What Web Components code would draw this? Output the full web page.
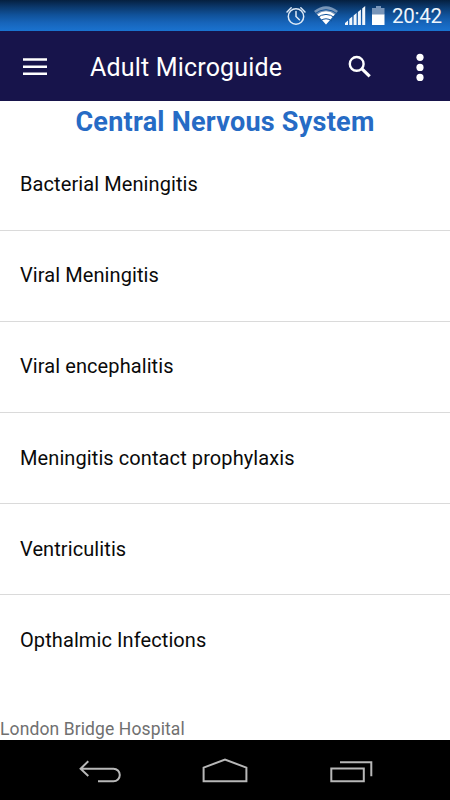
<!DOCTYPE html>
<html lang="en">
<head>
<meta charset="utf-8">
<title>Adult Microguide</title>
<style>
html, body { margin: 0; height: 100%; }
body { background: #fff; font-family: Roboto, "Liberation Sans", sans-serif; overflow: hidden; }
</style>
</head>
<body>
<guide-screen></guide-screen>
<script>
function define(name, html) {
  const template = document.createElement('template');
  template.innerHTML = html;
  customElements.define(name, class extends HTMLElement {
    constructor() {
      super();
      this.attachShadow({ mode: 'open' }).append(template.content.cloneNode(true));
    }
  });
}

define('status-bar', `
<style>
:host { display: flex; justify-content: flex-end; align-items: center; box-sizing: border-box; height: 31px; padding-right: 8px;
  background: linear-gradient(#05203f 0, #0a3566 6px, #10529a 15px, #1765bb 23px, #1a73d0 31px); color: #eef5fc; }
svg { display: block; flex: none; }
span { font-size: 20.5px; line-height: 31px; padding-top: 1px; width: 50px; margin-left: 7px; white-space: nowrap; letter-spacing: -.25px; }
</style>
<svg width="100" height="31" viewBox="285 0 100 31" fill="none">
  <g stroke="#dfeaf6" stroke-width="1.5">
    <circle cx="296" cy="16.5" r="7.7"/>
    <path d="M296 11.5v5l3.4 3.2M287 12l4.2-4.2M305 12l-4.2-4.2" stroke-linecap="round"/>
  </g>
  <path d="M314 11Q326 1.500 338 11L326 24.500Z" fill="#7795b8"/>
  <path d="M317.300 14.500Q326 8 334.700 14.500L326 24.500Z" fill="#fff"/>
  <path d="M314 14.300Q326 5 338 14.300M317 17.800Q326 11 335 17.800M320 21Q326 16.500 332 21" stroke="#11539b" stroke-width="1"/>
  <path d="M345 25v-2l3-2.500v4.500zM349.300 25v-6l3-2.500v8.500zM353.600 25v-9.500l3-2.500v12zM357.900 25v-13l3-2.500v15.500zM362.200 25v-16.500l3-2.500v19z" fill="#f2f6fb"/>
  <path d="M376 6h5v2h3.500v7h-12.500v-7h4z" fill="#7895b9"/>
  <path d="M372 14.500h12.500v10.500h-12.500z" fill="#fff"/>
</svg>
<span><slot></slot></span>`);

define('app-bar', `
<style>
:host { display: grid; grid-template-columns: 90px 1fr 60px 60px; align-items: center; height: 70px; background: #17144b; color: #fff; }
h1 { margin: 0; font-size: 25px; font-weight: 400; line-height: 70px; padding-top: 2px; white-space: nowrap; letter-spacing: .18px; }
svg { display: block; }
</style>
<svg width="90" height="70" viewBox="0 31 90 70"><path d="M23 58.500h24M23 65.700h24M23 72.700h24" stroke="#fff" stroke-width="2.600"/></svg>
<h1><slot></slot></h1>
<svg width="60" height="70" viewBox="330 31 60 70" fill="none" stroke="#fff"><circle cx="356.700" cy="62.900" r="6.900" stroke-width="2.400"/><path d="M361.700 67.700l8 7.700" stroke-width="3.200"/></svg>
<svg width="60" height="70" viewBox="390 31 60 70" fill="#fff"><circle cx="420" cy="56.300" r="3.600"/><circle cx="420" cy="66.400" r="3.600"/><circle cx="420" cy="76.400" r="3.600"/></svg>`);

define('section-title', `
<style>
:host { display: block; height: 38.4px; }
h2 { margin: 0; font-size: 27px; letter-spacing: .25px; line-height: 42px; font-weight: 700; text-align: center; color: #266bc5; white-space: nowrap; }
</style><h2><slot></slot></h2>`);

define('topic-row', `
<style>
:host { display: flex; align-items: center; box-sizing: border-box; height: 91.2px; padding: 0 20px .8px; border-bottom: 1px solid #dadada;
  font-size: 20px; line-height: 24px; letter-spacing: .09px; color: #0a0a0a; white-space: nowrap; }
:host(:last-child) { border-bottom-color: transparent; }
</style><span><slot></slot></span>`);

define('topic-list', `
<style>:host { display: block; }</style><slot></slot>`);

define('page-footer', `
<style>
:host { display: block; height: 23px; margin-top: auto; font-size: 17.5px; line-height: 24px; letter-spacing: .11px; color: #707070; white-space: nowrap; }
</style><slot></slot>`);

define('nav-bar', `
<style>
:host { display: block; height: 60px; background: #000; }
svg { display: block; }
</style>
<svg width="450" height="60" viewBox="0 740 450 60" fill="none" stroke="#b8b8b8" stroke-width="2">
  <path d="M98 781.300h15.500a6.300 6.300 0 0 0 0-12.600H81M88.300 761.200l-7.700 7.500 7.700 7.300"/>
  <path d="M203.600 781.300v-13.700l21.400-8 21.400 8v13.700z"/>
  <path d="M331.300 768.600h32.500v12.700h-32.500zM340 762.300h31.300v14"/>
</svg>`);

define('guide-screen', `
<style>:host { display: flex; flex-direction: column; width: 450px; height: 800px; background: #fff; }</style>
<status-bar>20:42</status-bar>
<app-bar>Adult Microguide</app-bar>
<section-title>Central Nervous System</section-title>
<topic-list>
<topic-row>Bacterial Meningitis</topic-row>
<topic-row>Viral Meningitis</topic-row>
<topic-row>Viral encephalitis</topic-row>
<topic-row>Meningitis contact prophylaxis</topic-row>
<topic-row>Ventriculitis</topic-row>
<topic-row>Opthalmic Infections</topic-row>
</topic-list>
<page-footer>London Bridge Hospital</page-footer>
<nav-bar></nav-bar>`);
</script>
</body>
</html>
